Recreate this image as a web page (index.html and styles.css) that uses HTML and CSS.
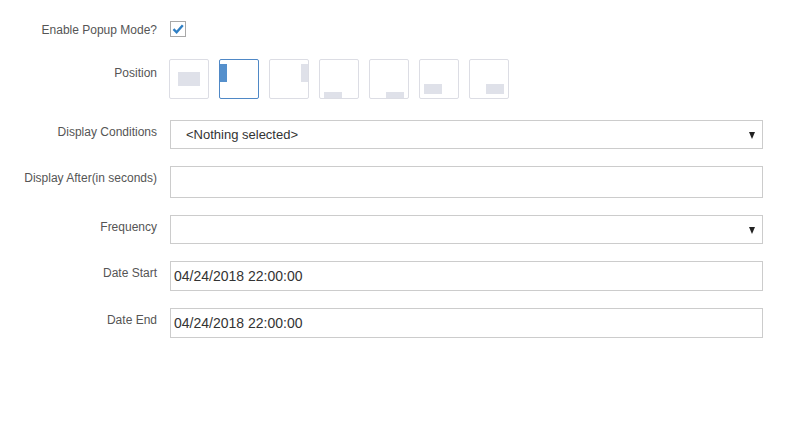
FILE: index.html
```html
<!DOCTYPE html>
<html>
<head>
<meta charset="utf-8">
<link rel="stylesheet" href="styles.css">
</head>
<body>
<div class="form">
  <div class="row row-check">
    <label class="lbl">Enable Popup Mode?</label>
    <div class="ctl">
      <span class="checkbox">
        <svg width="14" height="14" viewBox="0 0 14 14"><path d="M2.5 7.2 L5.6 10.3 L11.8 3.2" fill="none" stroke="#2f7fc4" stroke-width="2.4" stroke-linejoin="miter"/></svg>
      </span>
    </div>
  </div>
  <div class="row row-pos">
    <label class="lbl lbl-pos">Position</label>
    <div class="ctl positions">
      <span class="pos"><i class="blk center"></i></span>
      <span class="pos active"><i class="blk left"></i></span>
      <span class="pos"><i class="blk right"></i></span>
      <span class="pos"><i class="blk bl"></i></span>
      <span class="pos"><i class="blk br"></i></span>
      <span class="pos"><i class="blk cl"></i></span>
      <span class="pos"><i class="blk cr"></i></span>
    </div>
  </div>
  <div class="row">
    <label class="lbl">Display Conditions</label>
    <div class="ctl"><div class="select sel-cond"><span class="sel-text">&lt;Nothing selected&gt;</span><span class="caret"></span></div></div>
  </div>
  <div class="row">
    <label class="lbl">Display After(in seconds)</label>
    <div class="ctl"><div class="input in-tall"></div></div>
  </div>
  <div class="row">
    <label class="lbl">Frequency</label>
    <div class="ctl"><div class="select sel-freq"><span class="sel-text"></span><span class="caret"></span></div></div>
  </div>
  <div class="row">
    <label class="lbl">Date Start</label>
    <div class="ctl"><div class="input in-date">04/24/2018 22:00:00</div></div>
  </div>
  <div class="row">
    <label class="lbl">Date End</label>
    <div class="ctl"><div class="input in-date">04/24/2018 22:00:00</div></div>
  </div>
</div>
</body>
</html>
```
FILE: styles.css
```css
html, body {
  margin: 0;
  padding: 0;
  background: #fff;
}
body {
  font-family: "Liberation Sans", Arial, sans-serif;
  width: 793px;
  height: 428px;
  overflow: hidden;
}
.form {
  padding-top: 21px;
  display: flex;
  flex-direction: column;
  gap: 17px;
}
.row {
  display: grid;
  grid-template-columns: 157px 593px;
  column-gap: 13px;
  align-items: start;
}
.row-check { margin-bottom: 3px; }
.row-pos { margin-bottom: 4px; }
.lbl {
  font-size: 12px;
  line-height: 17px;
  color: #555;
  text-align: right;
  padding-top: 4px;
}
.row-check .lbl { padding-top: 1px; }
.lbl-pos { padding-top: 6px; }
.checkbox {
  display: flex;
  align-items: center;
  justify-content: center;
  width: 14px;
  height: 14px;
  border: 1px solid #a8a8a8;
  background: #fff;
}
.positions {
  display: flex;
  gap: 10px;
  margin-left: -1px;
}
.pos {
  position: relative;
  width: 38px;
  height: 38px;
  border: 1px solid #dcdde4;
  border-radius: 2px;
  background: #fff;
}
.pos.active {
  border-color: #4f88c6;
}
.blk {
  position: absolute;
  background: #dfe1e9;
}
.active .blk { background: #5590cc; }
.blk.center { left: 8px; top: 12px; width: 22px; height: 14px; }
.blk.left { left: 0; top: 4px; width: 7px; height: 18px; }
.blk.right { right: 0; top: 4px; width: 7px; height: 18px; }
.blk.bl { left: 4px; bottom: 0; width: 18px; height: 6px; }
.blk.br { right: 4px; bottom: 0; width: 18px; height: 6px; }
.blk.cl { left: 4px; bottom: 4px; width: 18px; height: 10px; }
.blk.cr { right: 4px; bottom: 4px; width: 18px; height: 10px; }
.select, .input {
  box-sizing: border-box;
  width: 593px;
  border: 1px solid #ccc;
  background: #fff;
  font-size: 14px;
  color: #333;
}
.select {
  height: 29px;
  display: flex;
  align-items: center;
  justify-content: space-between;
  padding: 0 7px 0 15px;
  font-size: 13px;
}
.caret {
  width: 0;
  height: 0;
  border-left: 3.5px solid transparent;
  border-right: 3.5px solid transparent;
  border-top: 7px solid #222;
  margin-top: 1px;
}
.in-tall { height: 32px; }
.in-date {
  height: 30px;
  line-height: 28px;
  padding-left: 3px;
}
```
